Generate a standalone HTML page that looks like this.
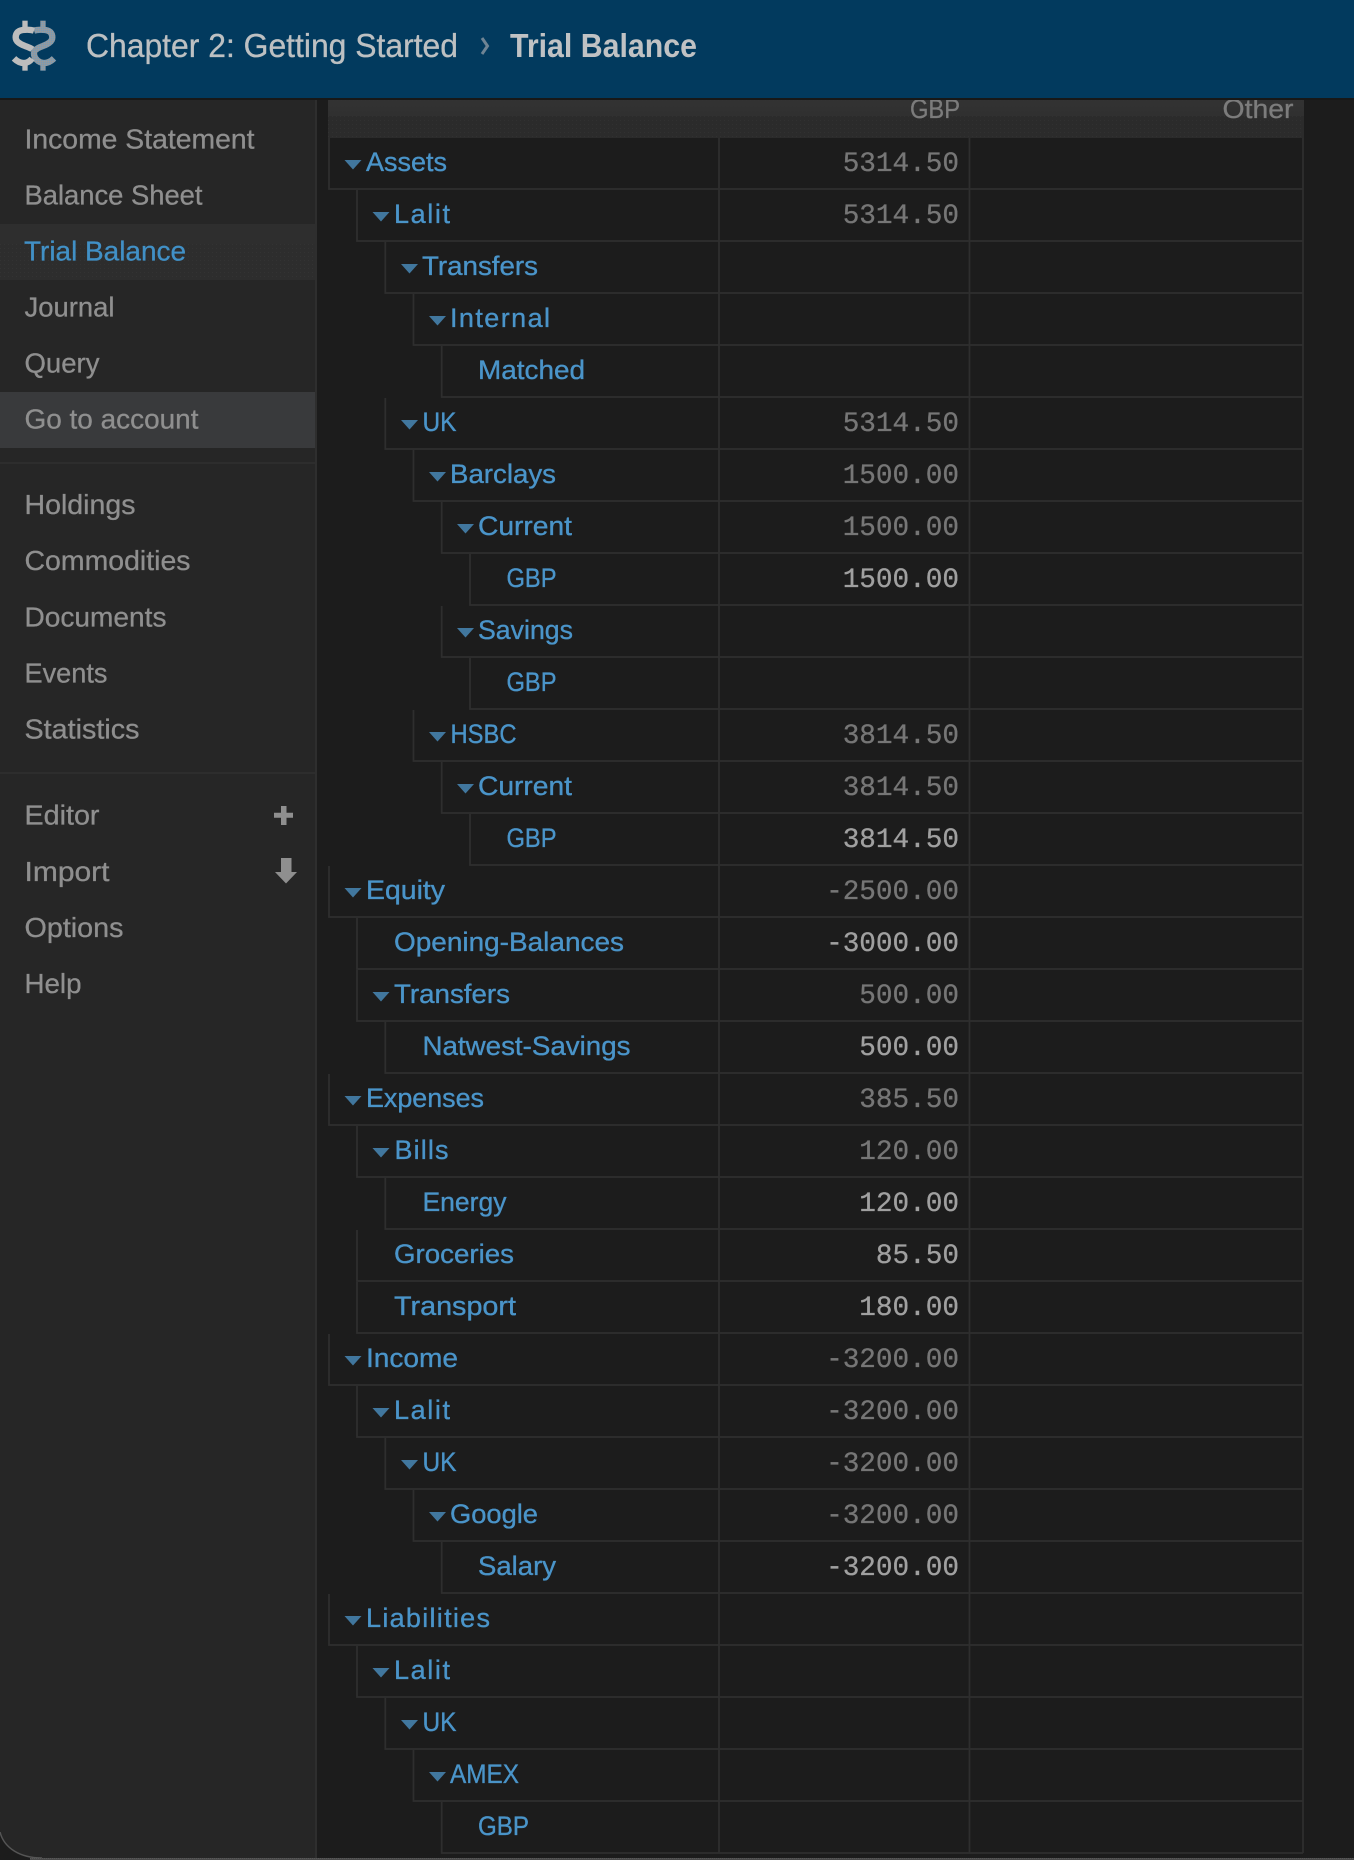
<!DOCTYPE html>
<html lang="en"><head><meta charset="utf-8"><title>Trial Balance</title>
<style>
html,body{margin:0;padding:0;background:#1c1c1c;width:1354px;height:1860px;overflow:hidden}
svg{display:block}
text{font-family:"Liberation Sans",sans-serif}
.nav{font-size:27.6px;fill:#8f8f8f;stroke:#8f8f8f;stroke-width:.3px}
.a{font-size:27px;fill:#4a94c9;stroke:#4a94c9;stroke-width:.35px;transform:translateY(-1px)}
.n,.m{font-family:"Liberation Mono",monospace;font-size:27.7px;text-anchor:end;stroke-width:.3px;transform:translateY(-1px)}
.n{fill:#767676;stroke:#767676}.m{fill:#a0a0a0;stroke:#a0a0a0}
.l{fill:none;stroke:#2e2e2e;stroke-width:1.8}
.t{fill:#41779e}
</style></head><body>
<svg xmlns="http://www.w3.org/2000/svg" width="1354" height="1860" viewBox="0 0 1354 1860">
<defs>
<pattern id="dots" width="2" height="2" patternUnits="userSpaceOnUse"><rect width="2" height="2" fill="#9a9a9a"/><rect width="1" height="1" fill="#5d9ccb"/></pattern>
<pattern id="dith" width="4" height="4" patternUnits="userSpaceOnUse"><rect width="4" height="4" fill="#2b2b2b"/><rect width="1" height="1" fill="#313131"/></pattern>
<pattern id="dith2" width="4" height="4" patternUnits="userSpaceOnUse"><rect width="4" height="4" fill="#2d2d2d"/><rect width="1" height="1" fill="#333"/></pattern>
<pattern id="bot" width="2" height="2" patternUnits="userSpaceOnUse"><rect width="2" height="2" fill="#4a4a4a"/><rect width="1" height="1" fill="#5a5a5a"/></pattern>
<linearGradient id="sh" x1="0" y1="0" x2="0" y2="1"><stop offset="0" stop-color="#333"/><stop offset="1" stop-color="#2c2c2c"/></linearGradient>
</defs>
<rect width="1354" height="1860" fill="#1c1c1c"/>
<!-- sidebar -->
<path d="M0 98H315V1858H40C18 1858 0 1845 0 1830Z" fill="#262626"/>
<rect x="315" y="98" width="2" height="1760" fill="#2e2e2e"/>
<path d="M0 1832C4 1848 20 1858 42 1858" fill="none" stroke="#555" stroke-width="1.5"/>
<rect x="30" y="1858" width="1324" height="2" fill="url(#bot)"/>
<rect y="224" width="315" height="56" fill="#2e2e2e"/><rect y="244" width="315" height="36" fill="url(#dith2)"/>
<rect y="392" width="315" height="56" fill="#393a3c"/>
<rect y="462" width="315" height="2" fill="#2d2d2d"/>
<rect y="772" width="315" height="2" fill="#2d2d2d"/>
<text class="nav" x="24.500" y="148.500" textLength="230" lengthAdjust="spacingAndGlyphs">Income Statement</text>
<text class="nav" x="24.500" y="204.500" textLength="178" lengthAdjust="spacingAndGlyphs">Balance Sheet</text>
<text class="nav" x="24" y="260.500" textLength="162" lengthAdjust="spacingAndGlyphs" style="fill:#4190c6;stroke:#4190c6">Trial Balance</text>
<text class="nav" x="24.500" y="316.500" textLength="90" lengthAdjust="spacingAndGlyphs">Journal</text>
<text class="nav" x="24.500" y="372.500" textLength="75" lengthAdjust="spacingAndGlyphs">Query</text>
<text class="nav" x="24.500" y="428.500" textLength="174" lengthAdjust="spacingAndGlyphs">Go to account</text>
<text class="nav" x="24.500" y="514" textLength="111" lengthAdjust="spacingAndGlyphs">Holdings</text>
<text class="nav" x="24.500" y="570" textLength="166" lengthAdjust="spacingAndGlyphs">Commodities</text>
<text class="nav" x="24.500" y="626.500" textLength="142" lengthAdjust="spacingAndGlyphs">Documents</text>
<text class="nav" x="24.500" y="682.500" textLength="83" lengthAdjust="spacingAndGlyphs">Events</text>
<text class="nav" x="24.500" y="738.500" textLength="115" lengthAdjust="spacingAndGlyphs">Statistics</text>
<text class="nav" x="24.500" y="824.500" textLength="75" lengthAdjust="spacingAndGlyphs">Editor</text>
<text class="nav" x="24.500" y="881" textLength="85" lengthAdjust="spacingAndGlyphs">Import</text>
<text class="nav" x="24.500" y="937" textLength="99" lengthAdjust="spacingAndGlyphs">Options</text>
<text class="nav" x="24.500" y="993" textLength="57" lengthAdjust="spacingAndGlyphs">Help</text>
<path d="M281 806h5.500v6.700h6.500v5h-6.500v7.300h-5.500v-7.300h-7v-5h7z" fill="#8f8f8f"/>
<path d="M281 858h10.500v14h5.500l-11 11.500l-11-11.500h6z" fill="#8f8f8f"/>
<!-- table header -->
<path d="M328 98H1304V138H328Z" fill="url(#sh)"/><rect x="328" y="116" width="976" height="22" fill="url(#dith)"/>
<text x="960" y="118" text-anchor="end" textLength="50" lengthAdjust="spacingAndGlyphs" style="font-size:27px;fill:#7c7c7c;stroke:#7c7c7c;stroke-width:.3px">GBP</text>
<text x="1293.500" y="118" text-anchor="end" textLength="71" lengthAdjust="spacingAndGlyphs" style="font-size:27px;fill:#7c7c7c;stroke:#7c7c7c;stroke-width:.3px">Other</text>
<!-- rows -->
<g><path class="l" d="M329 138V189H1303"/><path class="t" d="M344.500 160h17l-8.500 9.500z"/><text class="a" x="366" y="172" textLength="81" lengthAdjust="spacingAndGlyphs">Assets</text><text class="n" x="959" y="172">5314.50</text></g>
<g transform="translate(0,52)"><path class="l" d="M357 138V189H1303"/><path class="t" d="M372.500 160h17l-8.500 9.500z"/><text class="a" x="394" y="172" textLength="56" lengthAdjust="spacing">Lalit</text><text class="n" x="959" y="172">5314.50</text></g>
<g transform="translate(0,104)"><path class="l" d="M385.300 138V189H1303"/><path class="t" d="M401 160h17l-8.500 9.500z"/><text class="a" x="422" y="172" textLength="116" lengthAdjust="spacingAndGlyphs">Transfers</text></g>
<g transform="translate(0,156)"><path class="l" d="M413.500 138V189H1303"/><path class="t" d="M429 160h17l-8.500 9.500z"/><text class="a" x="450" y="172" textLength="100" lengthAdjust="spacing">Internal</text></g>
<g transform="translate(0,208)"><path class="l" d="M441.700 138V189H1303"/><text class="a" x="478" y="172" textLength="107" lengthAdjust="spacingAndGlyphs">Matched</text></g>
<g transform="translate(0,260)"><path class="l" d="M385.300 138V189H1303"/><path class="t" d="M401 160h17l-8.500 9.500z"/><text class="a" x="422.500" y="172" textLength="34" lengthAdjust="spacingAndGlyphs">UK</text><text class="n" x="959" y="172">5314.50</text></g>
<g transform="translate(0,312)"><path class="l" d="M413.500 138V189H1303"/><path class="t" d="M429 160h17l-8.500 9.500z"/><text class="a" x="450" y="172" textLength="106" lengthAdjust="spacingAndGlyphs">Barclays</text><text class="n" x="959" y="172">1500.00</text></g>
<g transform="translate(0,364)"><path class="l" d="M441.700 138V189H1303"/><path class="t" d="M457 160h17l-8.500 9.500z"/><text class="a" x="478" y="172" textLength="94" lengthAdjust="spacingAndGlyphs">Current</text><text class="n" x="959" y="172">1500.00</text></g>
<g transform="translate(0,416)"><path class="l" d="M470 138V189H1303"/><text class="a" x="506.500" y="172" textLength="50" lengthAdjust="spacingAndGlyphs">GBP</text><text class="m" x="959" y="172">1500.00</text></g>
<g transform="translate(0,468)"><path class="l" d="M441.700 138V189H1303"/><path class="t" d="M457 160h17l-8.500 9.500z"/><text class="a" x="478" y="172" textLength="95" lengthAdjust="spacingAndGlyphs">Savings</text></g>
<g transform="translate(0,520)"><path class="l" d="M470 138V189H1303"/><text class="a" x="506.500" y="172" textLength="50" lengthAdjust="spacingAndGlyphs">GBP</text></g>
<g transform="translate(0,572)"><path class="l" d="M413.500 138V189H1303"/><path class="t" d="M429 160h17l-8.500 9.500z"/><text class="a" x="450.500" y="172" textLength="66" lengthAdjust="spacingAndGlyphs">HSBC</text><text class="n" x="959" y="172">3814.50</text></g>
<g transform="translate(0,624)"><path class="l" d="M441.700 138V189H1303"/><path class="t" d="M457 160h17l-8.500 9.500z"/><text class="a" x="478" y="172" textLength="94" lengthAdjust="spacingAndGlyphs">Current</text><text class="n" x="959" y="172">3814.50</text></g>
<g transform="translate(0,676)"><path class="l" d="M470 138V189H1303"/><text class="a" x="506.500" y="172" textLength="50" lengthAdjust="spacingAndGlyphs">GBP</text><text class="m" x="959" y="172">3814.50</text></g>
<g transform="translate(0,728)"><path class="l" d="M329 138V189H1303"/><path class="t" d="M344.500 160h17l-8.500 9.500z"/><text class="a" x="366" y="172" textLength="79" lengthAdjust="spacingAndGlyphs">Equity</text><text class="n" x="959" y="172">-2500.00</text></g>
<g transform="translate(0,780)"><path class="l" d="M357 138V189H1303"/><text class="a" x="394" y="172" textLength="230" lengthAdjust="spacingAndGlyphs">Opening-Balances</text><text class="m" x="959" y="172">-3000.00</text></g>
<g transform="translate(0,832)"><path class="l" d="M357 138V189H1303"/><path class="t" d="M372.500 160h17l-8.500 9.500z"/><text class="a" x="394" y="172" textLength="116" lengthAdjust="spacingAndGlyphs">Transfers</text><text class="n" x="959" y="172">500.00</text></g>
<g transform="translate(0,884)"><path class="l" d="M385.300 138V189H1303"/><text class="a" x="422.500" y="172" textLength="208" lengthAdjust="spacingAndGlyphs">Natwest-Savings</text><text class="m" x="959" y="172">500.00</text></g>
<g transform="translate(0,936)"><path class="l" d="M329 138V189H1303"/><path class="t" d="M344.500 160h17l-8.500 9.500z"/><text class="a" x="366" y="172" textLength="118" lengthAdjust="spacingAndGlyphs">Expenses</text><text class="n" x="959" y="172">385.50</text></g>
<g transform="translate(0,988)"><path class="l" d="M357 138V189H1303"/><path class="t" d="M372.500 160h17l-8.500 9.500z"/><text class="a" x="394.500" y="172" textLength="54" lengthAdjust="spacing">Bills</text><text class="n" x="959" y="172">120.00</text></g>
<g transform="translate(0,1040)"><path class="l" d="M385.300 138V189H1303"/><text class="a" x="422.500" y="172" textLength="84" lengthAdjust="spacingAndGlyphs">Energy</text><text class="m" x="959" y="172">120.00</text></g>
<g transform="translate(0,1092)"><path class="l" d="M357 138V189H1303"/><text class="a" x="394" y="172" textLength="120" lengthAdjust="spacingAndGlyphs">Groceries</text><text class="m" x="959" y="172">85.50</text></g>
<g transform="translate(0,1144)"><path class="l" d="M357 138V189H1303"/><text class="a" x="394" y="172" textLength="122" lengthAdjust="spacingAndGlyphs">Transport</text><text class="m" x="959" y="172">180.00</text></g>
<g transform="translate(0,1196)"><path class="l" d="M329 138V189H1303"/><path class="t" d="M344.500 160h17l-8.500 9.500z"/><text class="a" x="366" y="172" textLength="92" lengthAdjust="spacingAndGlyphs">Income</text><text class="n" x="959" y="172">-3200.00</text></g>
<g transform="translate(0,1248)"><path class="l" d="M357 138V189H1303"/><path class="t" d="M372.500 160h17l-8.500 9.500z"/><text class="a" x="394" y="172" textLength="56" lengthAdjust="spacing">Lalit</text><text class="n" x="959" y="172">-3200.00</text></g>
<g transform="translate(0,1300)"><path class="l" d="M385.300 138V189H1303"/><path class="t" d="M401 160h17l-8.500 9.500z"/><text class="a" x="422.500" y="172" textLength="34" lengthAdjust="spacingAndGlyphs">UK</text><text class="n" x="959" y="172">-3200.00</text></g>
<g transform="translate(0,1352)"><path class="l" d="M413.500 138V189H1303"/><path class="t" d="M429 160h17l-8.500 9.500z"/><text class="a" x="450" y="172" textLength="88" lengthAdjust="spacingAndGlyphs">Google</text><text class="n" x="959" y="172">-3200.00</text></g>
<g transform="translate(0,1404)"><path class="l" d="M441.700 138V189H1303"/><text class="a" x="478" y="172" textLength="78" lengthAdjust="spacingAndGlyphs">Salary</text><text class="m" x="959" y="172">-3200.00</text></g>
<g transform="translate(0,1456)"><path class="l" d="M329 138V189H1303"/><path class="t" d="M344.500 160h17l-8.500 9.500z"/><text class="a" x="366" y="172" textLength="124" lengthAdjust="spacing">Liabilities</text></g>
<g transform="translate(0,1508)"><path class="l" d="M357 138V189H1303"/><path class="t" d="M372.500 160h17l-8.500 9.500z"/><text class="a" x="394" y="172" textLength="56" lengthAdjust="spacing">Lalit</text></g>
<g transform="translate(0,1560)"><path class="l" d="M385.300 138V189H1303"/><path class="t" d="M401 160h17l-8.500 9.500z"/><text class="a" x="422.500" y="172" textLength="34" lengthAdjust="spacingAndGlyphs">UK</text></g>
<g transform="translate(0,1612)"><path class="l" d="M413.500 138V189H1303"/><path class="t" d="M429 160h17l-8.500 9.500z"/><text class="a" x="450" y="172" textLength="69" lengthAdjust="spacingAndGlyphs">AMEX</text></g>
<g transform="translate(0,1664)"><path class="l" d="M441.700 138V189H1303"/><text class="a" x="478" y="172" textLength="51" lengthAdjust="spacingAndGlyphs">GBP</text></g>
<path class="l" d="M719 138V1853M969.500 138V1853M1303 138V1853"/>
<!-- top bar -->
<rect width="1354" height="98" fill="#023a5e"/>
<rect y="98" width="1354" height="2" fill="#181818"/>
<g transform="scale(.3333)" fill="none" stroke-width="19">
<g transform="translate(204,0) scale(-1,1)"><path d="M102 92C90 88 78 89 68 90C52 92 47 102 47 112C47 125 60 132 75 138C90 143 102 150 102 160C102 174 90 188 72 189C60 189 50 183 42 175" stroke="url(#dots)"/>
<rect x="67" y="62" width="16" height="22" fill="url(#dots)"/><rect x="67" y="190" width="16" height="22" fill="url(#dots)"/></g>
<path d="M102 92C90 88 78 89 68 90C52 92 47 102 47 112C47 125 60 132 75 138C86 142 92 144 97 148" stroke="#bdbdbd"/>
<path d="M42 175C50 183 60 189 72 189C82 189 90 184 96 176" stroke="#bdbdbd"/>
<rect x="67" y="62" width="16" height="22" fill="#bdbdbd"/><rect x="67" y="190" width="16" height="22" fill="#bdbdbd"/>
</g>
<text x="86" y="57" textLength="372" lengthAdjust="spacingAndGlyphs" style="font-size:33px;fill:#bdc0c2;stroke:#bdc0c2;stroke-width:.3px">Chapter 2: Getting Started</text>
<path d="M482 38l5.500 8l-5.500 8" fill="none" stroke="#6f8494" stroke-width="3"/>
<text x="510" y="57" textLength="187" lengthAdjust="spacingAndGlyphs" style="font-size:33px;font-weight:700;fill:#c0c2c4">Trial Balance</text>
</svg>
</body></html>
